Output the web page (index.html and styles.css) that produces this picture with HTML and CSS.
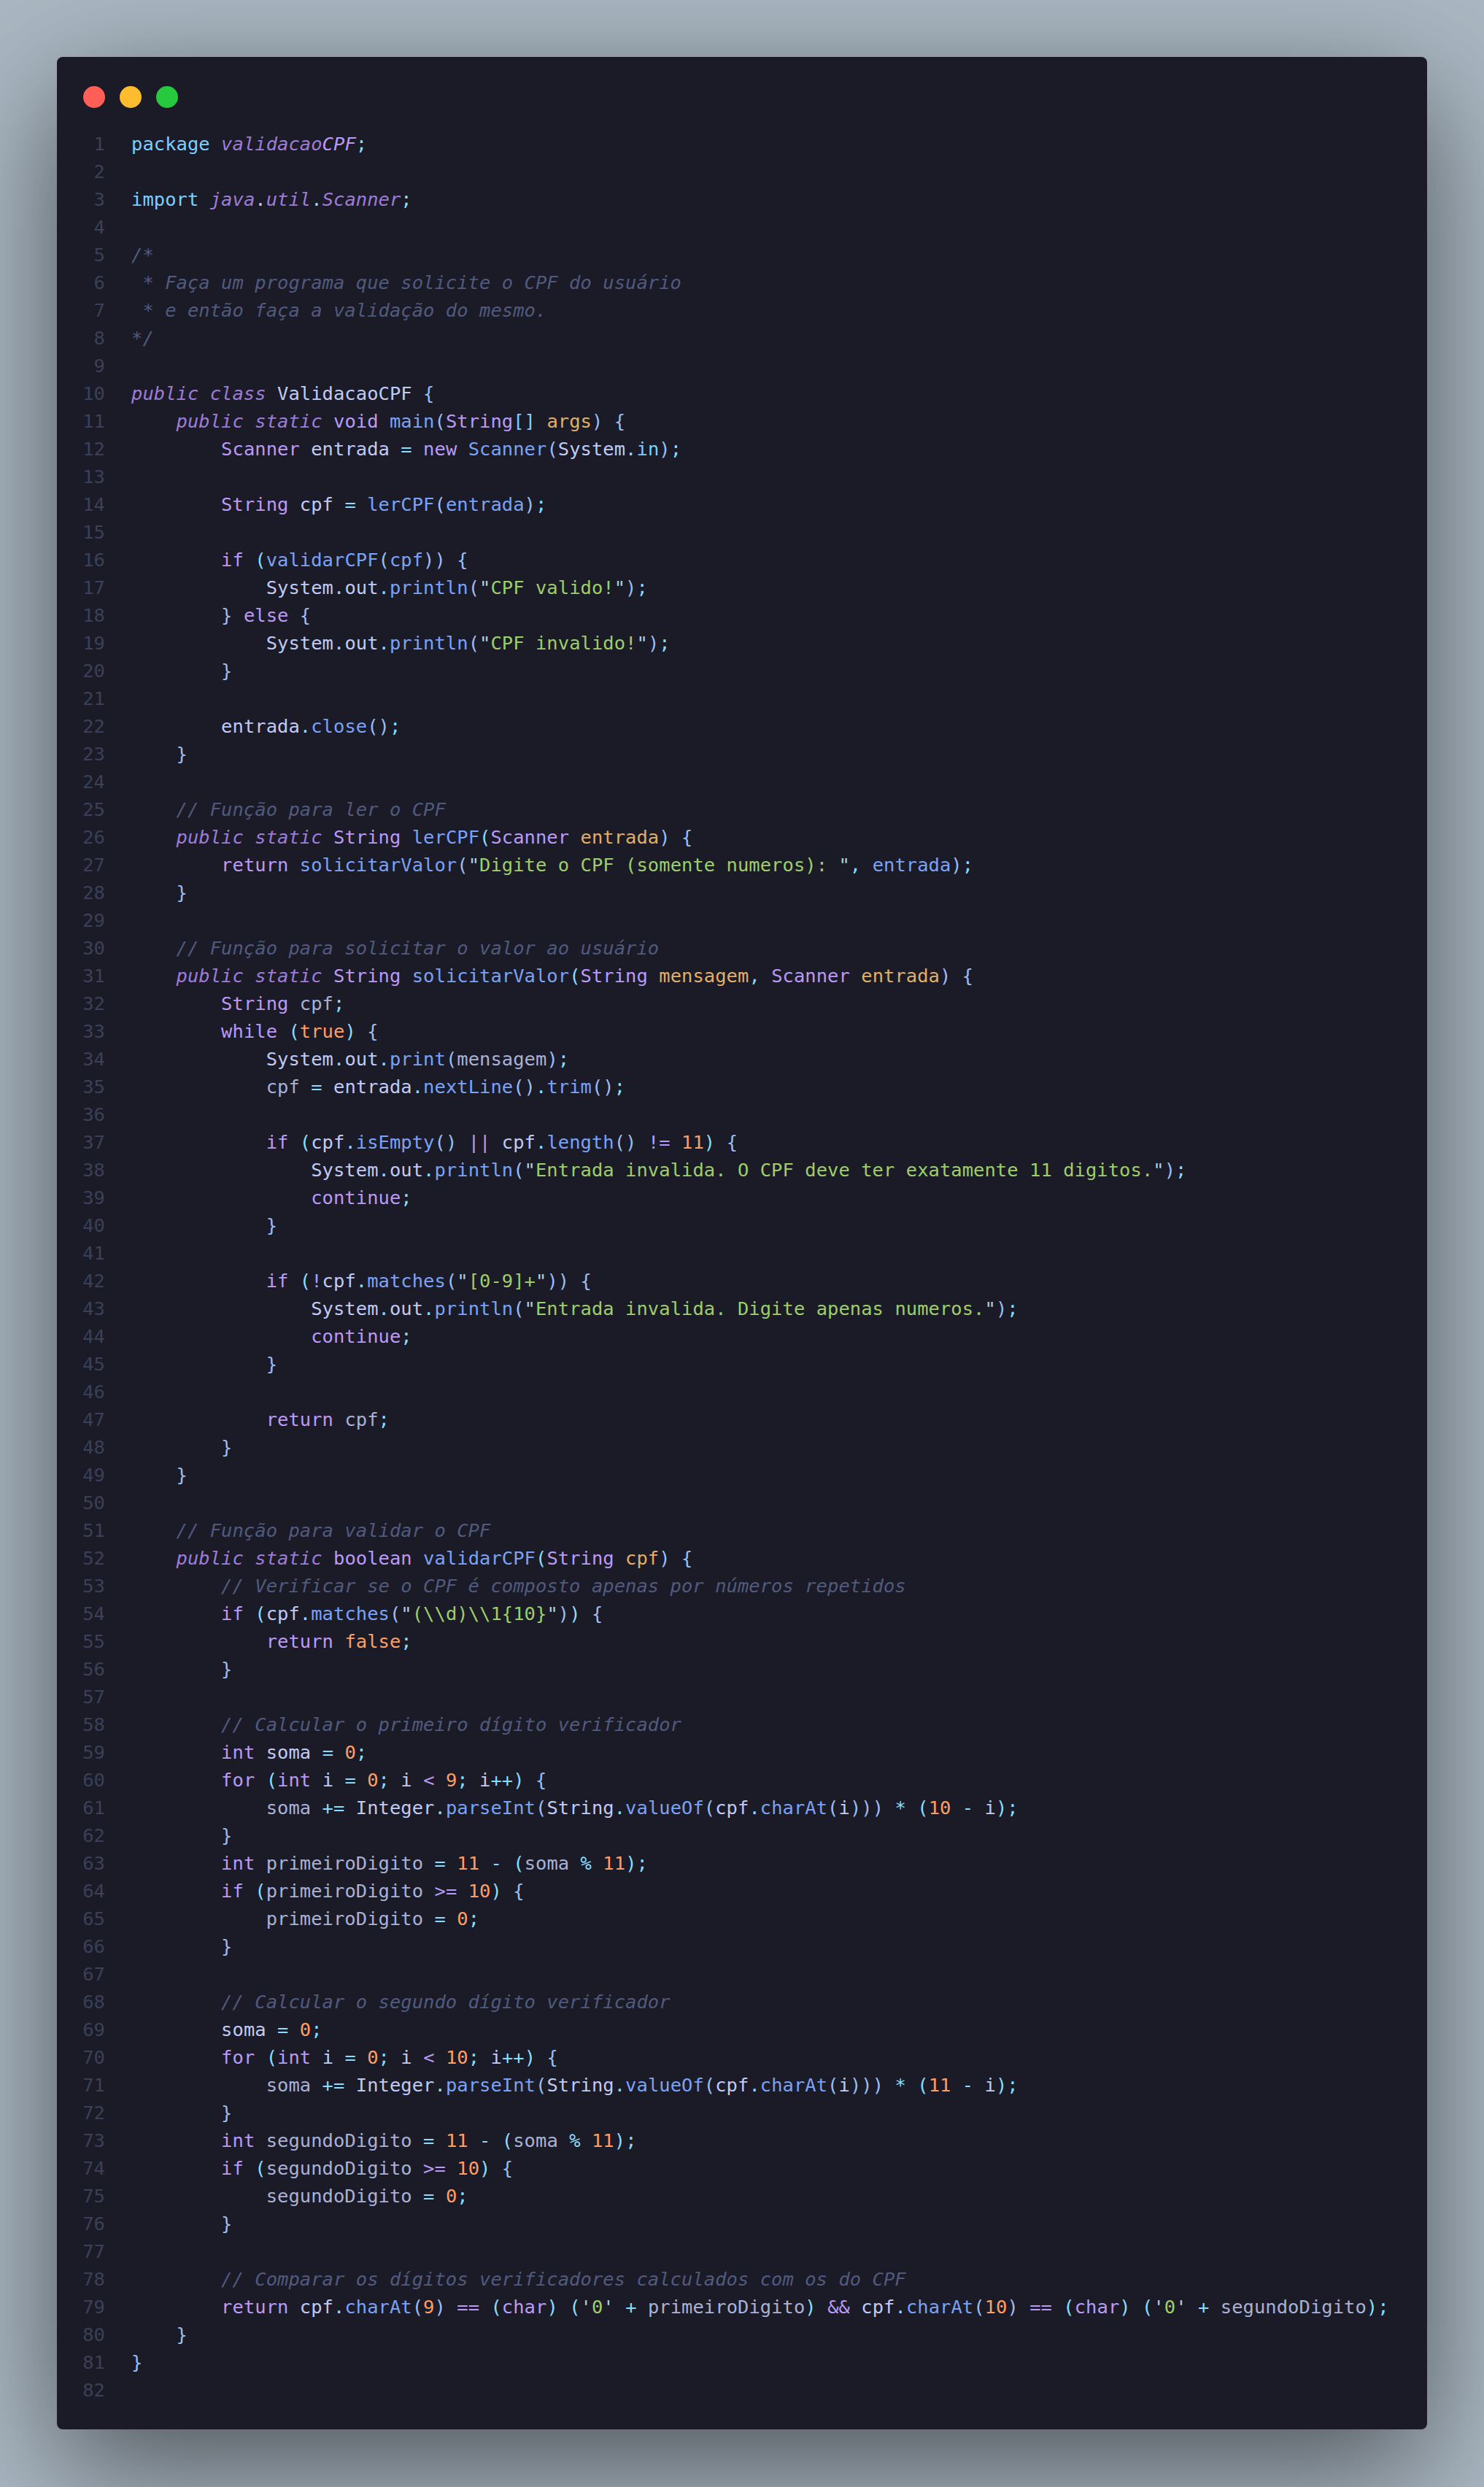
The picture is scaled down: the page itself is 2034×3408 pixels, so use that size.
FILE: index.html
```html
<!DOCTYPE html>
<html lang="pt">
<head>
<meta charset="utf-8">
<title>ValidacaoCPF.java</title>
<link rel="stylesheet" href="styles.css">
</head>
<body>
<main class="window">
<div class="dots"><span class="dot red"></span><span class="dot yellow"></span><span class="dot green"></span></div>
<div class="code">
<div class="ln"><span class="num">1</span><code><i class="p">package</i> <i class="m">validacao</i><i class="ku">CPF</i><i class="o">;</i></code></div>
<div class="ln"><span class="num">2</span><code></code></div>
<div class="ln"><span class="num">3</span><code><i class="p">import</i> <i class="m">java</i><i class="v">.</i><i class="m">util</i><i class="v">.</i><i class="m">Scanner</i><i class="o">;</i></code></div>
<div class="ln"><span class="num">4</span><code></code></div>
<div class="ln"><span class="num">5</span><code class="c">/*</code></div>
<div class="ln"><span class="num">6</span><code class="c"> * Faça um programa que solicite o CPF do usuário</code></div>
<div class="ln"><span class="num">7</span><code class="c"> * e então faça a validação do mesmo.</code></div>
<div class="ln"><span class="num">8</span><code class="c">*/</code></div>
<div class="ln"><span class="num">9</span><code></code></div>
<div class="ln"><span class="num">10</span><code><i class="m">public class</i> <i class="v">ValidacaoCPF</i> <i class="b">{</i></code></div>
<div class="ln"><span class="num">11</span><code>    <i class="m">public static</i> <i class="k">void</i> <i class="f">main</i><i class="b">(</i><i class="k">String</i><i class="p">[]</i> <i class="a">args</i><i class="b">) {</i></code></div>
<div class="ln"><span class="num">12</span><code>        <i class="k">Scanner</i> <i class="v">entrada</i> <i class="o">=</i> <i class="k">new</i> <i class="f">Scanner</i><i class="b">(</i><i class="v">System</i><i class="o">.</i><i class="p">in</i><i class="b">)</i><i class="o">;</i></code></div>
<div class="ln"><span class="num">13</span><code></code></div>
<div class="ln"><span class="num">14</span><code>        <i class="k">String</i> <i class="v">cpf</i> <i class="o">=</i> <i class="f">lerCPF</i><i class="b">(</i><i class="f">entrada</i><i class="b">)</i><i class="o">;</i></code></div>
<div class="ln"><span class="num">15</span><code></code></div>
<div class="ln"><span class="num">16</span><code>        <i class="k">if</i> <i class="o">(</i><i class="f">validarCPF</i><i class="b">(</i><i class="f">cpf</i><i class="b">)) {</i></code></div>
<div class="ln"><span class="num">17</span><code>            <i class="v">System</i><i class="o">.</i><i class="v">out</i><i class="o">.</i><i class="f">println</i><i class="b">(</i><i class="q">"</i><i class="s">CPF valido!</i><i class="q">"</i><i class="b">)</i><i class="o">;</i></code></div>
<div class="ln"><span class="num">18</span><code>        <i class="b">}</i> <i class="k">else</i> <i class="b">{</i></code></div>
<div class="ln"><span class="num">19</span><code>            <i class="v">System</i><i class="o">.</i><i class="v">out</i><i class="o">.</i><i class="f">println</i><i class="b">(</i><i class="q">"</i><i class="s">CPF invalido!</i><i class="q">"</i><i class="b">)</i><i class="o">;</i></code></div>
<div class="ln"><span class="num">20</span><code>        <i class="b">}</i></code></div>
<div class="ln"><span class="num">21</span><code></code></div>
<div class="ln"><span class="num">22</span><code>        <i class="v">entrada</i><i class="o">.</i><i class="f">close</i><i class="b">()</i><i class="o">;</i></code></div>
<div class="ln"><span class="num">23</span><code>    <i class="b">}</i></code></div>
<div class="ln"><span class="num">24</span><code></code></div>
<div class="ln"><span class="num">25</span><code class="c">    // Função para ler o CPF</code></div>
<div class="ln"><span class="num">26</span><code>    <i class="m">public static</i> <i class="k">String</i> <i class="f">lerCPF</i><i class="o">(</i><i class="k">Scanner</i> <i class="a">entrada</i><i class="b">) {</i></code></div>
<div class="ln"><span class="num">27</span><code>        <i class="k">return</i> <i class="f">solicitarValor</i><i class="b">(</i><i class="q">"</i><i class="s">Digite o CPF (somente numeros): </i><i class="q">"</i><i class="o">,</i> <i class="f">entrada</i><i class="b">)</i><i class="o">;</i></code></div>
<div class="ln"><span class="num">28</span><code>    <i class="b">}</i></code></div>
<div class="ln"><span class="num">29</span><code></code></div>
<div class="ln"><span class="num">30</span><code class="c">    // Função para solicitar o valor ao usuário</code></div>
<div class="ln"><span class="num">31</span><code>    <i class="m">public static</i> <i class="k">String</i> <i class="f">solicitarValor</i><i class="o">(</i><i class="k">String</i> <i class="a">mensagem</i><i class="o">,</i> <i class="k">Scanner</i> <i class="a">entrada</i><i class="b">) {</i></code></div>
<div class="ln"><span class="num">32</span><code>        <i class="k">String</i> <i class="t">cpf</i><i class="o">;</i></code></div>
<div class="ln"><span class="num">33</span><code>        <i class="k">while</i> <i class="o">(</i><i class="n">true</i><i class="o">)</i> <i class="b">{</i></code></div>
<div class="ln"><span class="num">34</span><code>            <i class="v">System</i><i class="o">.</i><i class="v">out</i><i class="o">.</i><i class="f">print</i><i class="b">(</i><i class="t">mensagem</i><i class="b">)</i><i class="o">;</i></code></div>
<div class="ln"><span class="num">35</span><code>            <i class="t">cpf</i> <i class="o">=</i> <i class="v">entrada</i><i class="o">.</i><i class="f">nextLine</i><i class="b">()</i><i class="o">.</i><i class="f">trim</i><i class="b">()</i><i class="o">;</i></code></div>
<div class="ln"><span class="num">36</span><code></code></div>
<div class="ln"><span class="num">37</span><code>            <i class="k">if</i> <i class="o">(</i><i class="v">cpf</i><i class="o">.</i><i class="f">isEmpty</i><i class="b">()</i> <i class="k">||</i> <i class="v">cpf</i><i class="o">.</i><i class="f">length</i><i class="b">()</i> <i class="k">!=</i> <i class="n">11</i><i class="o">)</i> <i class="b">{</i></code></div>
<div class="ln"><span class="num">38</span><code>                <i class="v">System</i><i class="o">.</i><i class="v">out</i><i class="o">.</i><i class="f">println</i><i class="b">(</i><i class="q">"</i><i class="s">Entrada invalida. O CPF deve ter exatamente 11 digitos.</i><i class="q">"</i><i class="b">)</i><i class="o">;</i></code></div>
<div class="ln"><span class="num">39</span><code>                <i class="k">continue</i><i class="o">;</i></code></div>
<div class="ln"><span class="num">40</span><code>            <i class="b">}</i></code></div>
<div class="ln"><span class="num">41</span><code></code></div>
<div class="ln"><span class="num">42</span><code>            <i class="k">if</i> <i class="o">(</i><i class="k">!</i><i class="v">cpf</i><i class="o">.</i><i class="f">matches</i><i class="b">(</i><i class="q">"</i><i class="s">[0-9]+</i><i class="q">"</i><i class="b">)) {</i></code></div>
<div class="ln"><span class="num">43</span><code>                <i class="v">System</i><i class="o">.</i><i class="v">out</i><i class="o">.</i><i class="f">println</i><i class="b">(</i><i class="q">"</i><i class="s">Entrada invalida. Digite apenas numeros.</i><i class="q">"</i><i class="b">)</i><i class="o">;</i></code></div>
<div class="ln"><span class="num">44</span><code>                <i class="k">continue</i><i class="o">;</i></code></div>
<div class="ln"><span class="num">45</span><code>            <i class="b">}</i></code></div>
<div class="ln"><span class="num">46</span><code></code></div>
<div class="ln"><span class="num">47</span><code>            <i class="k">return</i> <i class="t">cpf</i><i class="o">;</i></code></div>
<div class="ln"><span class="num">48</span><code>        <i class="b">}</i></code></div>
<div class="ln"><span class="num">49</span><code>    <i class="b">}</i></code></div>
<div class="ln"><span class="num">50</span><code></code></div>
<div class="ln"><span class="num">51</span><code class="c">    // Função para validar o CPF</code></div>
<div class="ln"><span class="num">52</span><code>    <i class="m">public static</i> <i class="k">boolean</i> <i class="f">validarCPF</i><i class="o">(</i><i class="k">String</i> <i class="a">cpf</i><i class="b">) {</i></code></div>
<div class="ln"><span class="num">53</span><code class="c">        // Verificar se o CPF é composto apenas por números repetidos</code></div>
<div class="ln"><span class="num">54</span><code>        <i class="k">if</i> <i class="o">(</i><i class="v">cpf</i><i class="o">.</i><i class="f">matches</i><i class="b">(</i><i class="q">"</i><i class="s">(\\d)\\1{10}</i><i class="q">"</i><i class="b">)</i><i class="o">)</i> <i class="b">{</i></code></div>
<div class="ln"><span class="num">55</span><code>            <i class="k">return</i> <i class="n">false</i><i class="o">;</i></code></div>
<div class="ln"><span class="num">56</span><code>        <i class="b">}</i></code></div>
<div class="ln"><span class="num">57</span><code></code></div>
<div class="ln"><span class="num">58</span><code class="c">        // Calcular o primeiro dígito verificador</code></div>
<div class="ln"><span class="num">59</span><code>        <i class="k">int</i> <i class="v">soma</i> <i class="o">=</i> <i class="n">0</i><i class="o">;</i></code></div>
<div class="ln"><span class="num">60</span><code>        <i class="k">for</i> <i class="o">(</i><i class="k">int</i> <i class="v">i</i> <i class="o">=</i> <i class="n">0</i><i class="o">;</i> <i class="v">i</i> <i class="k">&lt;</i> <i class="n">9</i><i class="o">;</i> <i class="v">i</i><i class="o">++)</i> <i class="b">{</i></code></div>
<div class="ln"><span class="num">61</span><code>            <i class="t">soma</i> <i class="o">+=</i> <i class="v">Integer</i><i class="o">.</i><i class="f">parseInt</i><i class="b">(</i><i class="v">String</i><i class="o">.</i><i class="f">valueOf</i><i class="b">(</i><i class="v">cpf</i><i class="o">.</i><i class="f">charAt</i><i class="b">(</i><i class="v">i</i><i class="b">)))</i> <i class="o">*</i> <i class="o">(</i><i class="n">10</i> <i class="o">-</i> <i class="v">i</i><i class="o">);</i></code></div>
<div class="ln"><span class="num">62</span><code>        <i class="b">}</i></code></div>
<div class="ln"><span class="num">63</span><code>        <i class="k">int</i> <i class="t">primeiroDigito</i> <i class="o">=</i> <i class="n">11</i> <i class="o">-</i> <i class="o">(</i><i class="t">soma</i> <i class="o">%</i> <i class="n">11</i><i class="o">);</i></code></div>
<div class="ln"><span class="num">64</span><code>        <i class="k">if</i> <i class="o">(</i><i class="t">primeiroDigito</i> <i class="k">&gt;=</i> <i class="n">10</i><i class="o">)</i> <i class="b">{</i></code></div>
<div class="ln"><span class="num">65</span><code>            <i class="t">primeiroDigito</i> <i class="o">=</i> <i class="n">0</i><i class="o">;</i></code></div>
<div class="ln"><span class="num">66</span><code>        <i class="b">}</i></code></div>
<div class="ln"><span class="num">67</span><code></code></div>
<div class="ln"><span class="num">68</span><code class="c">        // Calcular o segundo dígito verificador</code></div>
<div class="ln"><span class="num">69</span><code>        <i class="v">soma</i> <i class="o">=</i> <i class="n">0</i><i class="o">;</i></code></div>
<div class="ln"><span class="num">70</span><code>        <i class="k">for</i> <i class="o">(</i><i class="k">int</i> <i class="v">i</i> <i class="o">=</i> <i class="n">0</i><i class="o">;</i> <i class="v">i</i> <i class="k">&lt;</i> <i class="n">10</i><i class="o">;</i> <i class="v">i</i><i class="o">++)</i> <i class="b">{</i></code></div>
<div class="ln"><span class="num">71</span><code>            <i class="t">soma</i> <i class="o">+=</i> <i class="v">Integer</i><i class="o">.</i><i class="f">parseInt</i><i class="b">(</i><i class="v">String</i><i class="o">.</i><i class="f">valueOf</i><i class="b">(</i><i class="v">cpf</i><i class="o">.</i><i class="f">charAt</i><i class="b">(</i><i class="v">i</i><i class="b">)))</i> <i class="o">*</i> <i class="o">(</i><i class="n">11</i> <i class="o">-</i> <i class="v">i</i><i class="o">);</i></code></div>
<div class="ln"><span class="num">72</span><code>        <i class="b">}</i></code></div>
<div class="ln"><span class="num">73</span><code>        <i class="k">int</i> <i class="t">segundoDigito</i> <i class="o">=</i> <i class="n">11</i> <i class="o">-</i> <i class="o">(</i><i class="t">soma</i> <i class="o">%</i> <i class="n">11</i><i class="o">);</i></code></div>
<div class="ln"><span class="num">74</span><code>        <i class="k">if</i> <i class="o">(</i><i class="t">segundoDigito</i> <i class="k">&gt;=</i> <i class="n">10</i><i class="o">)</i> <i class="b">{</i></code></div>
<div class="ln"><span class="num">75</span><code>            <i class="t">segundoDigito</i> <i class="o">=</i> <i class="n">0</i><i class="o">;</i></code></div>
<div class="ln"><span class="num">76</span><code>        <i class="b">}</i></code></div>
<div class="ln"><span class="num">77</span><code></code></div>
<div class="ln"><span class="num">78</span><code class="c">        // Comparar os dígitos verificadores calculados com os do CPF</code></div>
<div class="ln"><span class="num">79</span><code>        <i class="k">return</i> <i class="v">cpf</i><i class="o">.</i><i class="f">charAt</i><i class="b">(</i><i class="n">9</i><i class="b">)</i> <i class="k">==</i> <i class="o">(</i><i class="k">char</i><i class="o">)</i> <i class="o">(</i><i class="q">'</i><i class="s">0</i><i class="q">'</i> <i class="o">+</i> <i class="t">primeiroDigito</i><i class="o">)</i> <i class="k">&amp;&amp;</i> <i class="v">cpf</i><i class="o">.</i><i class="f">charAt</i><i class="b">(</i><i class="n">10</i><i class="b">)</i> <i class="k">==</i> <i class="o">(</i><i class="k">char</i><i class="o">)</i> <i class="o">(</i><i class="q">'</i><i class="s">0</i><i class="q">'</i> <i class="o">+</i> <i class="t">segundoDigito</i><i class="o">);</i></code></div>
<div class="ln"><span class="num">80</span><code>    <i class="b">}</i></code></div>
<div class="ln"><span class="num">81</span><code><i class="b">}</i></code></div>
<div class="ln"><span class="num">82</span><code></code></div>
</div>
</main>
</body>
</html>
```
FILE: styles.css
```css
* { box-sizing: border-box; }
html, body { margin: 0; padding: 0; }
body {
  background: #abb8c3;
  padding: 78px;
  min-height: 3408px;
}
.window {
  background: #1a1b26;
  border-radius: 8px;
  box-shadow: 0 50px 170px rgba(0, 0, 0, 0.55);
  padding: 40px 36px 35px 35px;
}
.dots { display: flex; gap: 20px; padding-left: 1px; margin-bottom: 30px; }
.dot { width: 30px; height: 30px; border-radius: 50%; }
.red { background: #ff5f56; }
.yellow { background: #ffbd2e; }
.green { background: #27c93f; }
.code {
  font-family: "DejaVu Sans Mono", monospace;
  font-size: 25.5px;
  letter-spacing: 0.035px;
  line-height: 38px;
}
.ln { display: grid; grid-template-columns: 31px 1fr; column-gap: 36px; height: 38px; }
.num { text-align: right; color: #3b4058; }
code { font: inherit; letter-spacing: inherit; white-space: pre; color: #a9b1d6; }
code i { font-style: normal; }
code .m { font-style: italic; color: #9d7cd8; }
code .ku { font-style: italic; color: #bb9af7; }
.k { color: #bb9af7; }
.f { color: #7aa2f7; }
.o { color: #89ddff; }
.b { color: #9abdf5; }
.p { color: #7dcfff; }
.v { color: #c0caf5; }
.t { color: #a9b1d6; }
.s { color: #9ece6a; }
.q { color: #b4d0e0; }
.n { color: #ff9e64; }
.a { color: #e0af68; }
code.c { font-style: italic; color: #515a7e; }
```
